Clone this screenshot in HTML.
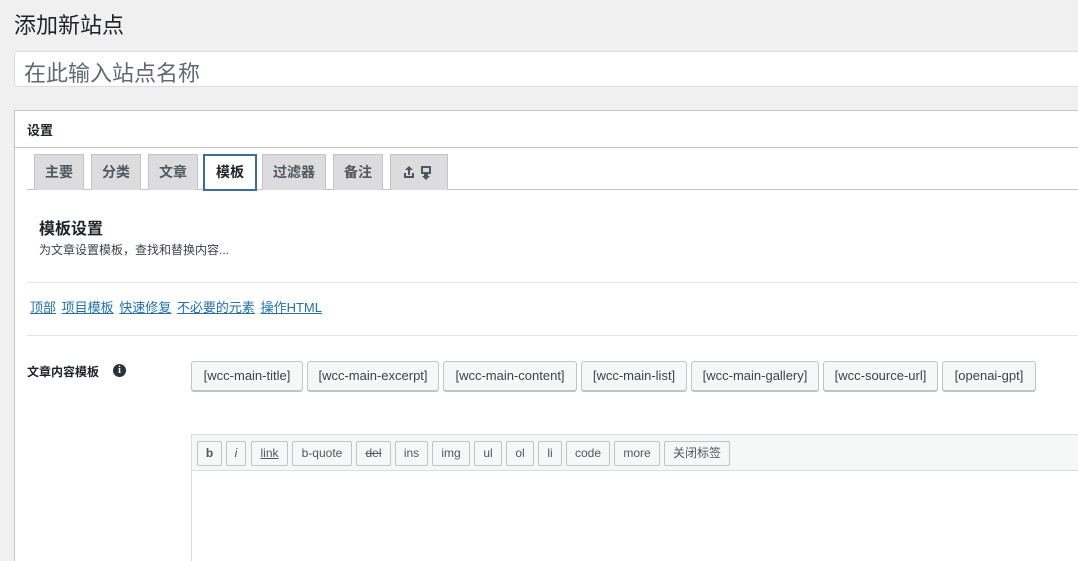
<!DOCTYPE html>
<html><head><meta charset="utf-8"><style>
*{box-sizing:border-box;margin:0;padding:0}
html,body{width:1078px;height:561px;overflow:hidden}
body{background:#f0f0f1;font-family:"Liberation Sans","Noto Sans CJK SC",sans-serif;color:#1d2327;position:relative}
.a{position:absolute;white-space:nowrap}
.tab{position:absolute;top:154px;height:36px;background:#dcdcde;border:1px solid #c3c4c7;border-bottom:none;font-size:14px;font-weight:bold;color:#50575e;text-align:center;line-height:34px}
.tb{position:absolute;top:361px;height:30px;border:1px solid #c3c4c7;border-radius:3px;background:#f6f7f7;font-size:13px;color:#3c434a;line-height:28px;text-align:center;box-shadow:0 1px 0 #c3c4c7}
.eb{position:absolute;top:441px;height:25px;border:1px solid #c3c4c7;border-radius:2px;background:#f6f7f7;font-size:12px;color:#50575e;line-height:23px;text-align:center}
a{color:#2271b1;text-decoration:underline;margin-right:2px}
</style></head><body>
<div class="a" style="left:14px;top:8px;font-size:22px;color:#1d2327">添加新站点</div>
<div class="a" style="left:14px;top:51px;width:1070px;height:36px;background:#fff;border:1px solid #dcdcde;border-radius:3px"></div>
<div class="a" style="left:24px;top:56px;font-size:22px;color:#646970">在此输入站点名称</div>

<div class="a" style="left:14px;top:110px;width:1070px;height:470px;background:#fff;border:1px solid #c3c4c7"></div>
<div class="a" style="left:15px;top:147px;width:1070px;height:1px;background:#c3c4c7"></div>
<div class="a" style="left:27px;top:120px;font-size:13px;font-weight:bold">设置</div>

<div class="a" style="left:27px;top:189px;width:1060px;height:1px;background:#c3c4c7"></div>
<div class="tab" style="left:34px;width:50px">主要</div>
<div class="tab" style="left:91px;width:50px">分类</div>
<div class="tab" style="left:148px;width:50px">文章</div>
<div class="tab" style="left:203px;width:54px;height:37px;background:#fff;border:2px solid #3a6e99;color:#1d2327;line-height:32px">模板</div>
<div class="tab" style="left:262px;width:64px">过滤器</div>
<div class="tab" style="left:333px;width:50px">备注</div>
<div class="tab" style="left:390px;width:58px">
<svg width="40" height="16" viewBox="0 0 40 16" style="margin-top:9px"><path d="M10 2l-4 4h3v5h2V6h3z M5 9v5h10V9h-2v3H7V9z" fill="#50575e"/><path d="M22 2h10v8h-3v2h2l-4 4-4-4h2v-2h-3z M24 4v4h6V4z" fill="#50575e"/></svg></div>

<div class="a" style="left:39px;top:215px;font-size:16px;font-weight:bold">模板设置</div>
<div class="a" style="left:39px;top:241px;font-size:12px;color:#3c434a">为文章设置模板，查找和替换内容...</div>
<div class="a" style="left:27px;top:282px;width:1060px;height:1px;background:#e5e5e5"></div>
<div class="a" style="left:30px;top:297px;font-size:13px"><a>顶部</a> <a>项目模板</a> <a>快速修复</a> <a>不必要的元素</a> <a>操作HTML</a></div>
<div class="a" style="left:27px;top:335px;width:1060px;height:1px;background:#e5e5e5"></div>

<div class="a" style="left:27px;top:363px;font-size:12px;font-weight:bold;color:#1d2327">文章内容模板</div>
<div class="a" style="left:113px;top:364px;width:13px;height:13px;border-radius:50%;background:#2c3338;color:#fff;font-size:10px;font-weight:bold;text-align:center;line-height:13px;font-family:'Liberation Serif',serif">i</div>

<div class="tb" style="left:191px;width:112px">[wcc-main-title]</div>
<div class="tb" style="left:307px;width:132px">[wcc-main-excerpt]</div>
<div class="tb" style="left:443px;width:134px">[wcc-main-content]</div>
<div class="tb" style="left:581px;width:106px">[wcc-main-list]</div>
<div class="tb" style="left:691px;width:128px">[wcc-main-gallery]</div>
<div class="tb" style="left:823px;width:115px">[wcc-source-url]</div>
<div class="tb" style="left:942px;width:94px">[openai-gpt]</div>

<div class="a" style="left:191px;top:434px;width:900px;height:140px;border:1px solid #dcdcde;background:#fff"></div>
<div class="a" style="left:192px;top:435px;width:900px;height:36px;background:#f6f7f7;border-bottom:1px solid #dcdcde"></div>
<div class="eb" style="left:197px;width:25px;font-weight:bold">b</div>
<div class="eb" style="left:226px;width:20px;font-style:italic">i</div>
<div class="eb" style="left:251px;width:37px;text-decoration:underline">link</div>
<div class="eb" style="left:292px;width:60px">b-quote</div>
<div class="eb" style="left:356px;width:35px;text-decoration:line-through">del</div>
<div class="eb" style="left:395px;width:33px">ins</div>
<div class="eb" style="left:432px;width:38px">img</div>
<div class="eb" style="left:474px;width:28px">ul</div>
<div class="eb" style="left:506px;width:28px">ol</div>
<div class="eb" style="left:538px;width:24px">li</div>
<div class="eb" style="left:566px;width:44px">code</div>
<div class="eb" style="left:614px;width:46px">more</div>
<div class="eb" style="left:664px;width:66px">关闭标签</div>
</body></html>
